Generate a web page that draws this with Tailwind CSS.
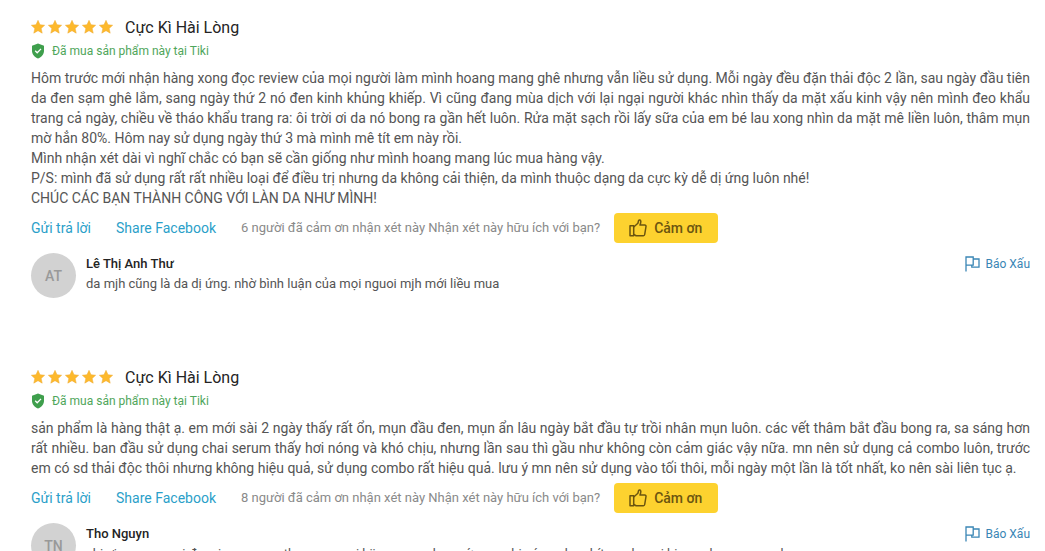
<!DOCTYPE html>
<html lang="vi">
<head>
    <meta charset="UTF-8">
    <meta name="viewport" content="width=device-width, initial-scale=1.0">
    <title>Nhận xét sản phẩm</title>
    <script src="https://cdn.jsdelivr.net/npm/@tailwindcss/browser@4"></script>
</head>
<body class="bg-white text-[#555] text-sm/5 overflow-hidden" style="font-family: Roboto, 'Liberation Sans', sans-serif;">

    <!-- Shared icons -->
    <svg class="hidden">
        <symbol id="star" viewBox="0 0 16 16">
            <path d="M8 .4l2.300 5 5.300.6-4 3.600 1.200 5.400L8 12.200 3.200 15l1.200-5.400L.4 6l5.300-.6z" fill="#fdb92c" stroke="#f0ac35" stroke-width=".6" stroke-linejoin="round"/>
        </symbol>
        <symbol id="shield" viewBox="0 0 14 16">
            <path d="M7 .5l6 2.200v5c0 3.600-2.600 6.400-6 7.800-3.400-1.400-6-4.200-6-7.800v-5z" fill="#3f9f4d"/>
            <path d="M4.200 7.800l2 2 3.800-3.900" fill="none" stroke="#fff" stroke-width="1.300"/>
        </symbol>
        <symbol id="thumb" viewBox="0 0 18 18">
            <g fill="none" stroke="currentColor" stroke-width="1.500" stroke-linejoin="round">
                <path d="M1 6.800h3.700v10H1z"/>
                <path d="M4.700 8l4.200-3.700.8-3c.5-.8 2-.3 2.100.9.100 1.300-.3 2.700-.8 3.900h4.800c.8 0 1.300.6 1.200 1.400l-1.300 8c-.1.700-.6 1.200-1.300 1.200H7.200l-2.500-1.200"/>
            </g>
        </symbol>
        <symbol id="flag" viewBox="0 0 15 16">
            <path d="M1 15.500V1h7.200v8.200H1M8.200 3H14v8.200H6.800V9.200" fill="none" stroke="currentColor" stroke-width="1.300"/>
        </symbol>
    </svg>

    <main class="pl-[31px] pr-[15px] pt-[18px] flex flex-col gap-[70px]">

        <!-- Review 1 -->
        <article>
            <header class="flex items-center gap-3">
                <div class="-mt-0.5 flex gap-[3px]" role="img" aria-label="5 sao">
                    <svg class="size-3.5"><use href="#star"/></svg>
                    <svg class="size-3.5"><use href="#star"/></svg>
                    <svg class="size-3.5"><use href="#star"/></svg>
                    <svg class="size-3.5"><use href="#star"/></svg>
                    <svg class="size-3.5"><use href="#star"/></svg>
                </div>
                <h2 class="text-base/5 text-[#242424]">Cực Kì Hài Lòng</h2>
            </header>
            <p class="mt-[3px] flex items-center gap-[7px] text-xs/5 text-[#4fa65b]">
                <svg class="w-3.5 h-4"><use href="#shield"/></svg>
                Đã mua sản phẩm này tại Tiki
            </p>
            <p class="mt-[7px] text-justify">Hôm trước mới nhận hàng xong đọc review của mọi người làm mình hoang mang ghê nhưng vẫn liều sử dụng. Mỗi ngày đều đặn thải độc 2 lần, sau ngày đầu tiên da đen sạm ghê lắm, sang ngày thứ 2 nó đen kinh khủng khiếp. Vì cũng đang mùa dịch với lại ngại người khác nhìn thấy da mặt xấu kinh vậy nên mình đeo khẩu trang cả ngày, chiều về tháo khẩu trang ra: ôi trời ơi da nó bong ra gần hết luôn. Rửa mặt sạch rồi lấy sữa của em bé lau xong nhìn da mặt mê liền luôn, thâm mụn mờ hẳn 80%. Hôm nay sử dụng ngày thứ 3 mà mình mê tít em này rồi.<br>
            Mình nhận xét dài vì nghĩ chắc có bạn sẽ cần giống như mình hoang mang lúc mua hàng vậy.<br>
            P/S: mình đã sử dụng rất rất nhiều loại để điều trị nhưng da không cải thiện, da mình thuộc dạng da cực kỳ dễ dị ứng luôn nhé!<br>
            CHÚC CÁC BẠN THÀNH CÔNG VỚI LÀN DA NHƯ MÌNH!</p>
            <div class="mt-[5px] flex items-center">
                <a href="#" class="text-[#2b9fc9]">Gửi trả lời</a>
                <a href="#" class="ml-[25px] text-[#2b9fc9]">Share Facebook</a>
                <span class="ml-[25px] text-[13px]/5 text-[#8a8a8a]">6 người đã cảm ơn nhận xét này Nhận xét này hữu ích với bạn?</span>
                <button class="ml-3.5 h-[30px] pl-[15px] pr-4 flex items-center gap-[7px] rounded-sm bg-[#fdd22f] text-[#6b5510] font-medium">
                    <svg class="size-[18px]"><use href="#thumb"/></svg>
                    Cảm ơn
                </button>
            </div>
            <div class="mt-2.5 flex items-start gap-2.5">
                <div class="size-[45px] shrink-0 rounded-full bg-[#d2d2d2] flex items-center justify-center font-medium text-[#999]">AT</div>
                <div class="flex-1 pt-px text-[13px]/5">
                    <h3 class="font-medium text-[#242424]">Lê Thị Anh Thư</h3>
                    <p>da mjh cũng là da dị ứng. nhờ bình luận của mọi nguoi mjh mới liều mua</p>
                </div>
                <a href="#" class="pt-px flex items-center gap-1.5 text-xs/5 text-[#3a86b5]">
                    <svg class="w-[15px] h-4"><use href="#flag"/></svg>
                    Báo Xấu
                </a>
            </div>
        </article>

        <!-- Review 2 -->
        <article>
            <header class="flex items-center gap-3">
                <div class="-mt-0.5 flex gap-[3px]" role="img" aria-label="5 sao">
                    <svg class="size-3.5"><use href="#star"/></svg>
                    <svg class="size-3.5"><use href="#star"/></svg>
                    <svg class="size-3.5"><use href="#star"/></svg>
                    <svg class="size-3.5"><use href="#star"/></svg>
                    <svg class="size-3.5"><use href="#star"/></svg>
                </div>
                <h2 class="text-base/5 text-[#242424]">Cực Kì Hài Lòng</h2>
            </header>
            <p class="mt-[3px] flex items-center gap-[7px] text-xs/5 text-[#4fa65b]">
                <svg class="w-3.5 h-4"><use href="#shield"/></svg>
                Đã mua sản phẩm này tại Tiki
            </p>
            <p class="mt-[7px] text-justify">sản phẩm là hàng thật ạ. em mới sài 2 ngày thấy rất ổn, mụn đầu đen, mụn ẩn lâu ngày bắt đầu tự trồi nhân mụn luôn. các vết thâm bắt đầu bong ra, sa sáng hơn rất nhiều. ban đầu sử dụng chai serum thấy hơi nóng và khó chịu, nhưng lần sau thì gầu như không còn cảm giác vậy nữa. mn nên sử dụng cả combo luôn, trước em có sd thải độc thôi nhưng không hiệu quả, sử dụng combo rất hiệu quả. lưu ý mn nên sử dụng vào tối thôi, mỗi ngày một lần là tốt nhất, ko nên sài liên tục ạ.</p>
            <div class="mt-[5px] flex items-center">
                <a href="#" class="text-[#2b9fc9]">Gửi trả lời</a>
                <a href="#" class="ml-[25px] text-[#2b9fc9]">Share Facebook</a>
                <span class="ml-[25px] text-[13px]/5 text-[#8a8a8a]">8 người đã cảm ơn nhận xét này Nhận xét này hữu ích với bạn?</span>
                <button class="ml-3.5 h-[30px] pl-[15px] pr-4 flex items-center gap-[7px] rounded-sm bg-[#fdd22f] text-[#6b5510] font-medium">
                    <svg class="size-[18px]"><use href="#thumb"/></svg>
                    Cảm ơn
                </button>
            </div>
            <div class="mt-2.5 flex items-start gap-2.5">
                <div class="size-[45px] shrink-0 rounded-full bg-[#d2d2d2] flex items-center justify-center font-medium text-[#999]">TN</div>
                <div class="flex-1 pt-px text-[13px]/5">
                    <h3 class="font-medium text-[#242424]">Tho Nguyn</h3>
                    <p>chị ơi em mua roi đem in so a nua thoa xong rui hiju ma nao hon cứu em chi có vay hon hít vao ha roi hin ma hon sa mun h</p>
                </div>
                <a href="#" class="pt-px flex items-center gap-1.5 text-xs/5 text-[#3a86b5]">
                    <svg class="w-[15px] h-4"><use href="#flag"/></svg>
                    Báo Xấu
                </a>
            </div>
        </article>

    </main>
</body>
</html>
